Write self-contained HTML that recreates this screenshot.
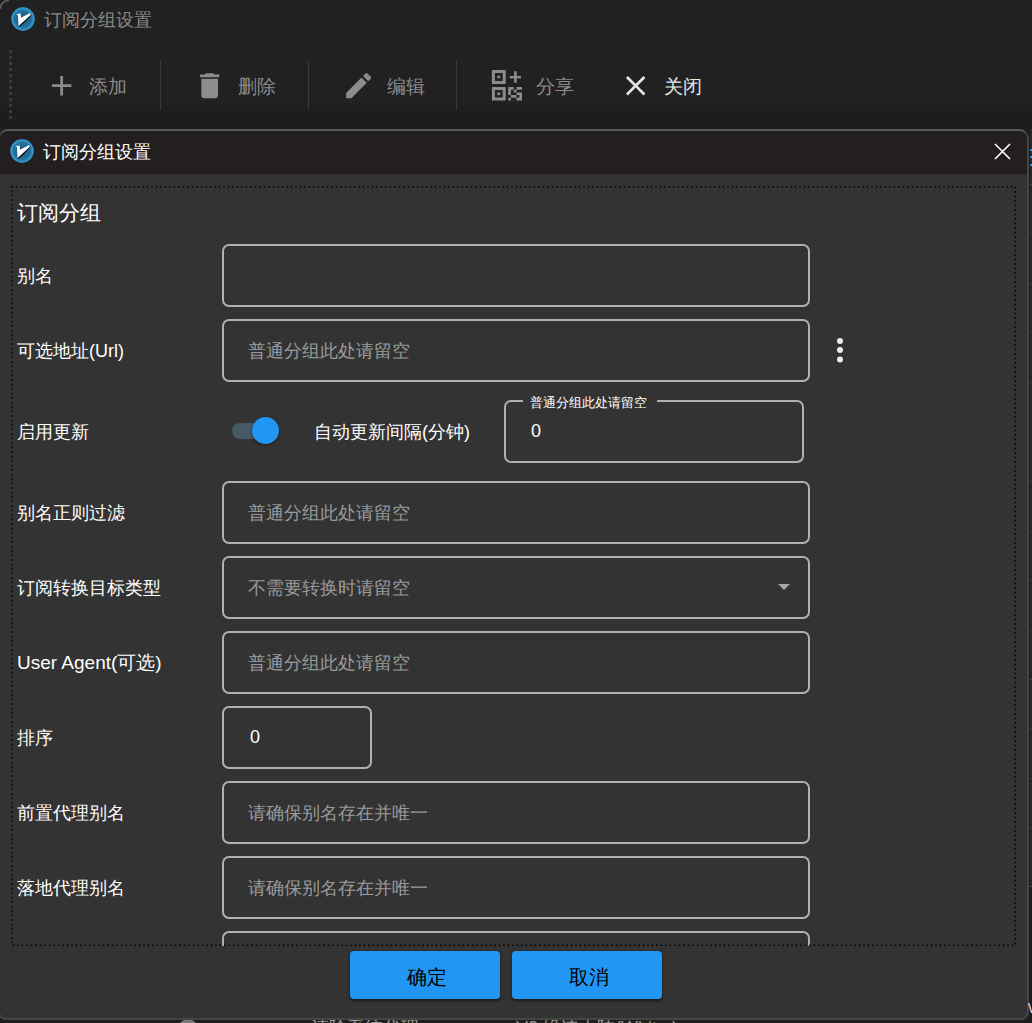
<!DOCTYPE html>
<html><head><meta charset="utf-8">
<style>
*{box-sizing:border-box;margin:0;padding:0}
html,body{width:1032px;height:1023px;overflow:hidden;background:#1e1e1e;font-family:"Liberation Sans",sans-serif}
.a{position:absolute}
.t{position:absolute;white-space:nowrap;line-height:1}
.tb{color:#8c8c8c;font-size:18.6px}
.sep{position:absolute;width:1px;background:#3a3a3a}
.inp{position:absolute;border:2px solid #b0b0b0;border-radius:7px}
.lbl{position:absolute;color:#fff;font-size:18px;line-height:1;white-space:nowrap}
.ph{position:absolute;color:#9a9a9a;font-size:18px;line-height:1;white-space:nowrap}
.btn{position:absolute;background:#2196f3;border-radius:4px;box-shadow:0 1.5px 3px rgba(0,0,0,.55);color:#000;font-size:20px;text-align:center}
</style></head><body>
<!-- background window -->
<div class="a" style="left:0;top:0;width:1032px;height:130px;background:#212121"></div>
<svg class="a" style="left:0;top:0" width="14" height="14"><path d="M0.3 9 A8.7 8.7 0 0 1 9 0.3" stroke="#5c5c5c" stroke-width="1.8" fill="none"/></svg>
<div class="a" style="left:0;top:105px;width:1032px;height:24px;background:#1d1d1d"></div>
<svg class="a" style="left:11px;top:7px" width="24" height="24" viewBox="0 0 24 24"><defs><radialGradient id="vg" cx="50%" cy="50%" r="50%"><stop offset="0" stop-color="#1d5676"/><stop offset="0.7" stop-color="#23709c"/><stop offset="1" stop-color="#3aa3dc"/></radialGradient></defs>
<circle cx="12" cy="12" r="11.7" fill="url(#vg)"/>
<path d="M19.6 8 L7.6 19.1 L8.7 19.8 L20.2 8.8 Z" fill="#000"/>
<path d="M5.2 7.1 L9.7 6.6 L9.9 10.7 L19.1 5.9 L19.6 8 L7.6 19.1 L6.9 7.9 Z" fill="#fff"/></svg>
<div class="t" style="left:44px;top:10.5px;font-size:18.4px;color:#8a8a8a">订阅分组设置</div>
<div class="a" style="left:9px;top:50px;width:3px;height:72px;background:repeating-linear-gradient(#3a3a3a 0 3px,transparent 3px 6px)"></div>
<svg class="a" style="left:44.9px;top:68.7px" width="33.34" height="33.34" viewBox="0 0 24 24"><path d="M19 13h-6v6h-2v-6H5v-2h6V5h2v6h6v2z" fill="#8c8c8c"/></svg>
<div class="t tb" style="left:89px;top:78px">添加</div>
<div class="sep" style="left:160px;top:60px;height:50px"></div>
<svg class="a" style="left:193.2px;top:68.8px" width="33.34" height="33.34" viewBox="0 0 24 24"><path d="M6 19c0 1.1.9 2 2 2h8c1.1 0 2-.9 2-2V7H6v12zM19 4h-3.5l-1-1h-5l-1 1H5v2h14V4z" fill="#8c8c8c"/></svg>
<div class="t tb" style="left:238px;top:78px">删除</div>
<div class="sep" style="left:308px;top:60px;height:50px"></div>
<svg class="a" style="left:341.7px;top:68.8px" width="33.34" height="33.34" viewBox="0 0 24 24"><path d="M3 17.25V21h3.75L17.81 9.94l-3.75-3.75L3 17.25zM20.71 7.04c.39-.39.39-1.02 0-1.41l-2.34-2.34c-.39-.39-1.02-.39-1.41 0l-1.83 1.83 3.75 3.75 1.83-1.83z" fill="#8c8c8c"/></svg>
<div class="t tb" style="left:387px;top:78px">编辑</div>
<div class="sep" style="left:456px;top:60px;height:50px"></div>
<svg class="a" style="left:486px;top:66px" width="42" height="38" viewBox="486 66 42 38"><g fill="#8c8c8c"><path fill-rule="evenodd" d="M491.9 70.1h13.8v13.8h-13.8z M494.9 73.1v7.8h7.8v-7.8z"/><rect x="497.3" y="75.7" width="2.9" height="2.6"/><path fill-rule="evenodd" d="M491.9 86.9h13.8v13.7h-13.8z M494.9 89.9v7.7h7.8v-7.7z"/><rect x="497.3" y="92.5" width="2.9" height="2.6"/><rect x="514.1" y="71.3" width="2.6" height="11.4"/><rect x="509.8" y="76" width="11.2" height="2.4"/><path d="M508.20 86.90h2.76v2.74h-2.76zM510.96 86.90h2.76v2.74h-2.76zM516.48 86.90h2.76v2.74h-2.76zM519.24 86.90h2.76v2.74h-2.76zM508.20 89.64h2.76v2.74h-2.76zM513.72 89.64h2.76v2.74h-2.76zM508.20 92.38h2.76v2.74h-2.76zM516.48 92.38h2.76v2.74h-2.76zM519.24 92.38h2.76v2.74h-2.76zM510.96 95.12h2.76v2.74h-2.76zM513.72 95.12h2.76v2.74h-2.76zM519.24 95.12h2.76v2.74h-2.76zM508.20 97.86h2.76v2.74h-2.76zM516.48 97.86h2.76v2.74h-2.76zM519.24 97.86h2.76v2.74h-2.76z"/></g></svg>
<div class="t tb" style="left:536px;top:78px">分享</div>
<svg class="a" style="left:619px;top:69px" width="33.34" height="33.34" viewBox="0 0 24 24"><path d="M19 6.41L17.59 5 12 10.59 6.41 5 5 6.41 10.59 12 5 17.59 6.41 19 12 13.41 17.59 19 19 17.59 13.41 12z" fill="#e6e6e6"/></svg>
<div class="t tb" style="left:664px;top:78px;color:#e8e8e8">关闭</div>
<!-- bottom background items -->
<div class="a" style="left:178px;top:1019px;width:20px;height:20px;border-radius:50%;background:#777"></div>
<div class="t" style="left:311px;top:1019px;font-size:18px;color:#9a9a9a">清除系统代理</div>
<div class="t" style="left:516px;top:1019px;font-size:18px;color:#9a9a9a">V2 缘速上陆(Whit...)</div>
<!-- dialog -->
<div class="a" style="left:1029px;top:129px;width:3px;height:757px;background:#282828;border-left:1px solid #1a1a1a"></div>
<div class="a" style="left:1029px;top:886px;width:3px;height:137px;background:#1c1c1c;border-top:1px solid #444"></div>
<div class="a" style="left:1030px;top:184px;width:2px;height:1px;background:#444;box-shadow:0 49.5px 0 #444,0 99px 0 #444,0 148.5px 0 #444,0 198px 0 #444,0 247.5px 0 #444,0 297px 0 #444,0 346.5px 0 #444,0 396px 0 #444,0 445.5px 0 #444,0 495px 0 #444,0 544.5px 0 #444,0 594px 0 #444,0 643.5px 0 #444"></div>
<div class="a" style="left:1030px;top:149px;width:2px;height:2px;background:#3d8fd6;box-shadow:0 7px 0 #3d8fd6,0 15px 0 #3d8fd6"></div>
<div class="a" style="left:-2px;top:129px;width:1030.5px;height:891px;background:#333;border:2px solid #454545;border-top:2px solid #5a5a5a;border-radius:10px 10px 8px 8px"></div>
<div class="a" style="left:0;top:131px;width:1026.5px;height:43px;background:#231f20;border-radius:8px 8px 0 0"></div>
<svg class="a" style="left:10px;top:139px" width="24" height="24" viewBox="0 0 24 24"><defs><radialGradient id="vg2" cx="50%" cy="50%" r="50%"><stop offset="0" stop-color="#1d5676"/><stop offset="0.7" stop-color="#23709c"/><stop offset="1" stop-color="#3aa3dc"/></radialGradient></defs>
<circle cx="12" cy="12" r="11.7" fill="url(#vg2)"/>
<path d="M19.6 8 L7.6 19.1 L8.7 19.8 L20.2 8.8 Z" fill="#000"/>
<path d="M5.2 7.1 L9.7 6.6 L9.9 10.7 L19.1 5.9 L19.6 8 L7.6 19.1 L6.9 7.9 Z" fill="#fff"/></svg>
<div class="t" style="left:43px;top:143px;font-size:18.4px;color:#fff">订阅分组设置</div>
<svg class="a" style="left:994px;top:143px" width="17" height="17" viewBox="0 0 17 17"><path d="M1 1L16 16M16 1L1 16" stroke="#fff" stroke-width="1.6"/></svg>
<div class="lbl" style="left:17px;top:202px;font-size:21px">订阅分组</div>
<div class="lbl" style="left:17px;top:267px;">别名</div>
<div class="lbl" style="left:17px;top:342px;">可选地址(Url)</div>
<div class="lbl" style="left:17px;top:423px;">启用更新</div>
<div class="lbl" style="left:17px;top:504px;">别名正则过滤</div>
<div class="lbl" style="left:17px;top:579px;">订阅转换目标类型</div>
<div class="lbl" style="left:17px;top:804px;">前置代理别名</div>
<div class="lbl" style="left:17px;top:879px;">落地代理别名</div>
<div class="lbl" style="left:17px;top:729px;">排序</div>
<div class="lbl" style="left:17px;top:653px;font-size:19px">User Agent(可选)</div>
<div class="inp" style="left:222px;top:244px;width:588px;height:63px"></div>
<div class="inp" style="left:222px;top:319px;width:588px;height:63px"></div>
<div class="inp" style="left:222px;top:481px;width:588px;height:63px"></div>
<div class="inp" style="left:222px;top:556px;width:588px;height:63px"></div>
<div class="inp" style="left:222px;top:631px;width:588px;height:63px"></div>
<div class="inp" style="left:222px;top:781px;width:588px;height:63px"></div>
<div class="inp" style="left:222px;top:856px;width:588px;height:63px"></div>
<div class="inp" style="left:222px;top:931px;width:588px;height:63px"></div>
<div class="inp" style="left:222px;top:706px;width:150px;height:63px"></div>
<div class="inp" style="left:504px;top:400px;width:300px;height:63px"></div>
<div class="ph" style="left:248px;top:342px;">普通分组此处请留空</div>
<div class="ph" style="left:248px;top:504px;">普通分组此处请留空</div>
<div class="ph" style="left:248px;top:579px;">不需要转换时请留空</div>
<div class="ph" style="left:248px;top:654px;">普通分组此处请留空</div>
<div class="ph" style="left:248px;top:804px;">请确保别名存在并唯一</div>
<div class="ph" style="left:248px;top:879px;">请确保别名存在并唯一</div>
<div class="lbl" style="left:250px;top:728px;">0</div>
<div class="lbl" style="left:531px;top:422px;">0</div>
<div class="lbl" style="left:314px;top:423px;">自动更新间隔(分钟)</div>
<div class="a" style="left:523px;top:395px;width:134px;height:12px;background:#333"></div>
<div class="t" style="left:530px;top:396px;font-size:13px;color:#fff">普通分组此处请留空</div>
<div class="a" style="left:837px;top:338px;width:6px;height:6px;border-radius:50%;background:#eee;box-shadow:0 9px 0 #eee,0 18.4px 0 #eee"></div>
<div class="a" style="left:778px;top:584px;width:0;height:0;border-left:6px solid transparent;border-right:6px solid transparent;border-top:6px solid #a8a8a8"></div>
<div class="a" style="left:232px;top:423px;width:40px;height:16px;border-radius:8px;background:#455a64"></div>
<div class="a" style="left:252px;top:417px;width:27px;height:27px;border-radius:50%;background:#2196f3;box-shadow:0 1px 3px rgba(0,0,0,.5)"></div>
<div class="a" style="left:12px;top:945.5px;width:1003px;height:72px;background:#333"></div>
<svg class="a" style="left:0;top:0" width="1032" height="1023"><rect x="11.75" y="186.75" width="1003.5" height="758.5" fill="none" stroke="#000" stroke-width="1.5" stroke-dasharray="1.5 3"/></svg>
<div class="btn" style="left:350px;top:951px;width:150px;height:48px;line-height:52px;padding-left:3px">确定</div>
<div class="btn" style="left:512px;top:951px;width:150px;height:48px;line-height:52px;padding-left:3px">取消</div>
<div class="t" style="left:1028px;top:1001px;font-size:14px;color:#ddd">W</div>
</body></html>
